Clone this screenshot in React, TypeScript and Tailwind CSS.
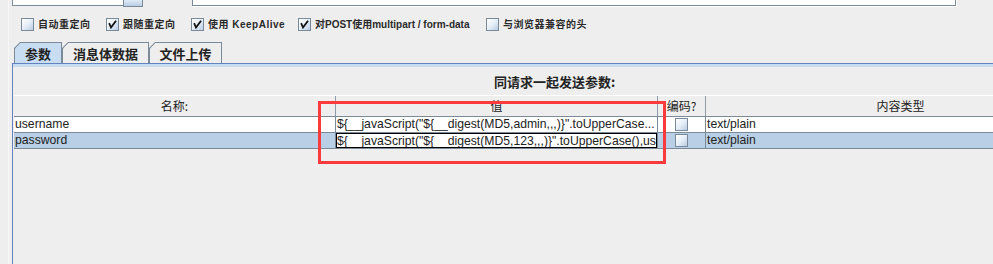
import React from "react";

function TopBox({ checked }: { checked?: boolean }) {
  return (
    <div className="w-[13px] h-[13px] shrink-0 border border-[#7a8a99] bg-linear-to-br from-[#ffffff] via-[#e6eef7] to-[#b8cde4] flex items-center justify-center">
      {checked && (
        <svg width="11" height="11" viewBox="0 0 11 11">
          <polyline points="2.5,5 4,8.5 8.5,2.5" fill="none" stroke="#111" strokeWidth="1.8" strokeLinecap="square" />
        </svg>
      )}
    </div>
  );
}

function CellBox() {
  return (
    <div className="w-[13px] h-[13px] border border-[#7a8a99] bg-linear-to-br from-[#ffffff] via-[#e6eef7] to-[#b8cde4]" />
  );
}

function Check({ w, checked, children }: { w: string; checked?: boolean; children: React.ReactNode }) {
  return (
    <div className={`flex items-center shrink-0 ${w}`}>
      <TopBox checked={checked} />
      <span className="ml-[4px] whitespace-nowrap text-[10px] leading-[13px] font-bold tracking-[0.5px] text-[#2a2a2a] font-['Liberation_Sans','Noto_Sans_CJK_SC',sans-serif]">
        {children}
      </span>
    </div>
  );
}

function Tab({ w, selected, children }: { w: string; selected?: boolean; children: React.ReactNode }) {
  return (
    <div className={`${w} h-[21px] shrink-0 bg-[#7a8a99] pt-px pl-px pr-px [clip-path:polygon(0_6px,6px_0,100%_0,100%_100%,0_100%)]`}>
      <div
        className={`h-full w-full flex items-center justify-center [clip-path:polygon(0_5.4px,5.4px_0,100%_0,100%_100%,0_100%)] ${
          selected ? "bg-[#c8ddf2]" : "bg-[#eeeeee]"
        }`}
      >
        <span className="text-[13px] leading-[16px] font-bold text-[#222] font-['Noto_Sans_CJK_SC',sans-serif] pt-[1px]">{children}</span>
      </div>
    </div>
  );
}

const cellText = "text-[12.2px] leading-[15px] text-[#222] font-['Liberation_Sans','Noto_Sans_CJK_SC',sans-serif] whitespace-nowrap overflow-hidden";
const headText = "text-[12px] leading-[20px] text-[#222] font-['Noto_Sans_CJK_SC',sans-serif] whitespace-nowrap overflow-hidden text-center";

export default function App() {
  return (
    <div className="relative w-[993px] h-[264px] overflow-hidden bg-[#eeeeee] flex">
      <div className="w-[8px] shrink-0" />
      <div className="w-px shrink-0 bg-[#f8f8f8]" />
      <div className="w-[3px] shrink-0" />
      <div className="w-[1200px] shrink-0 flex flex-col">
        {/* top fields */}
        <div className="flex h-[7px] shrink-0">
          <div className="w-[111px] h-[6px] bg-white border-l border-b border-[#7a8a99]" />
          <div className="w-[20px] h-[7px] bg-linear-to-b from-[#e2ebf5] to-[#b9cde5] border-x border-b border-[#7a8a99]" />
          <div className="ml-[49px] w-[765px] h-[7px] border-r border-b border-white">
            <div className="h-[6px] bg-white border-x border-b border-[#7a8a99]" />
          </div>
        </div>

        {/* checkbox row */}
        <div className="flex mt-[11px] pl-[9px] h-[13px] shrink-0">
          <Check w="w-[85px]">自动重定向</Check>
          <Check w="w-[85px]" checked>跟随重定向</Check>
          <Check w="w-[107px]" checked>使用 KeepAlive</Check>
          <Check w="w-[188px]" checked>
            <span className="tracking-normal">对POST使用multipart / form-data</span>
          </Check>
          <Check w="w-[200px]">与浏览器兼容的头</Check>
        </div>

        {/* tabs */}
        <div className="flex mt-[11px] pl-[2px] shrink-0">
          <Tab w="w-[48px]" selected>参数</Tab>
          <Tab w="w-[87px]">消息体数据</Tab>
          <Tab w="w-[73px]">文件上传</Tab>
        </div>

        {/* panel */}
        <div className="flex-1 border-l border-t border-[#6382bf] flex flex-col">
          <div className="h-[3px] bg-[#c8ddf2]" />
          <div className="pl-px flex flex-col">
            <div className="w-[1081px] h-[28px] flex items-center justify-center pt-[2px]">
              <span className="text-[13px] leading-[16px] font-bold text-[#222] font-['Noto_Sans_CJK_SC',sans-serif]">同请求一起发送参数:</span>
            </div>
            {/* table */}
            <div className="w-[1081px] flex flex-col">
              <div className="flex h-[22px] border-t border-white border-b border-b-[#7a8a99]">
                <div className={`w-[322px] border-r border-[#8f9cab] ${headText}`}>名称:</div>
                <div className={`w-[322px] border-r border-[#8f9cab] ${headText}`}>值</div>
                <div className={`w-[48px] border-r border-[#8f9cab] ${headText}`}>编码?</div>
                <div className={`w-[389px] ${headText}`}>内容类型</div>
              </div>
              <div className="flex h-[16px] bg-white border-b border-[#7a8a99]">
                <div className={`w-[322px] border-r border-[#7a8a99] pl-px ${cellText}`}>username</div>
                <div className={`w-[322px] border-r border-[#7a8a99] pl-px ${cellText}`}>{'${__javaScript("${__digest(MD5,admin,,,)}".toUpperCase...'}</div>
                <div className="w-[48px] border-r border-[#7a8a99] flex items-center justify-center">
                  <CellBox />
                </div>
                <div className={`w-[389px] pl-px ${cellText}`}>text/plain</div>
              </div>
              <div className="flex h-[16px] bg-[#b8cfe5] border-b border-[#7a8a99]">
                <div className={`w-[322px] border-r border-[#7a8a99] pl-px ${cellText}`}>password</div>
                <div className="w-[322px] border-r border-[#7a8a99] bg-white">
                  <div className={`h-[15px] border border-black ${cellText} leading-[13px]`}>{'${__javaScript("${__digest(MD5,123,,,)}".toUpperCase(),us'}</div>
                </div>
                <div className="w-[48px] border-r border-[#7a8a99] flex items-center justify-center">
                  <CellBox />
                </div>
                <div className={`w-[389px] pl-px ${cellText}`}>text/plain</div>
              </div>
            </div>
          </div>
        </div>
      </div>

      {/* red annotation */}
      <div className="absolute left-[318px] top-[101px] w-[348px] h-[63px] border-[3px] border-[#fb3b3b]" />
    </div>
  );
}
